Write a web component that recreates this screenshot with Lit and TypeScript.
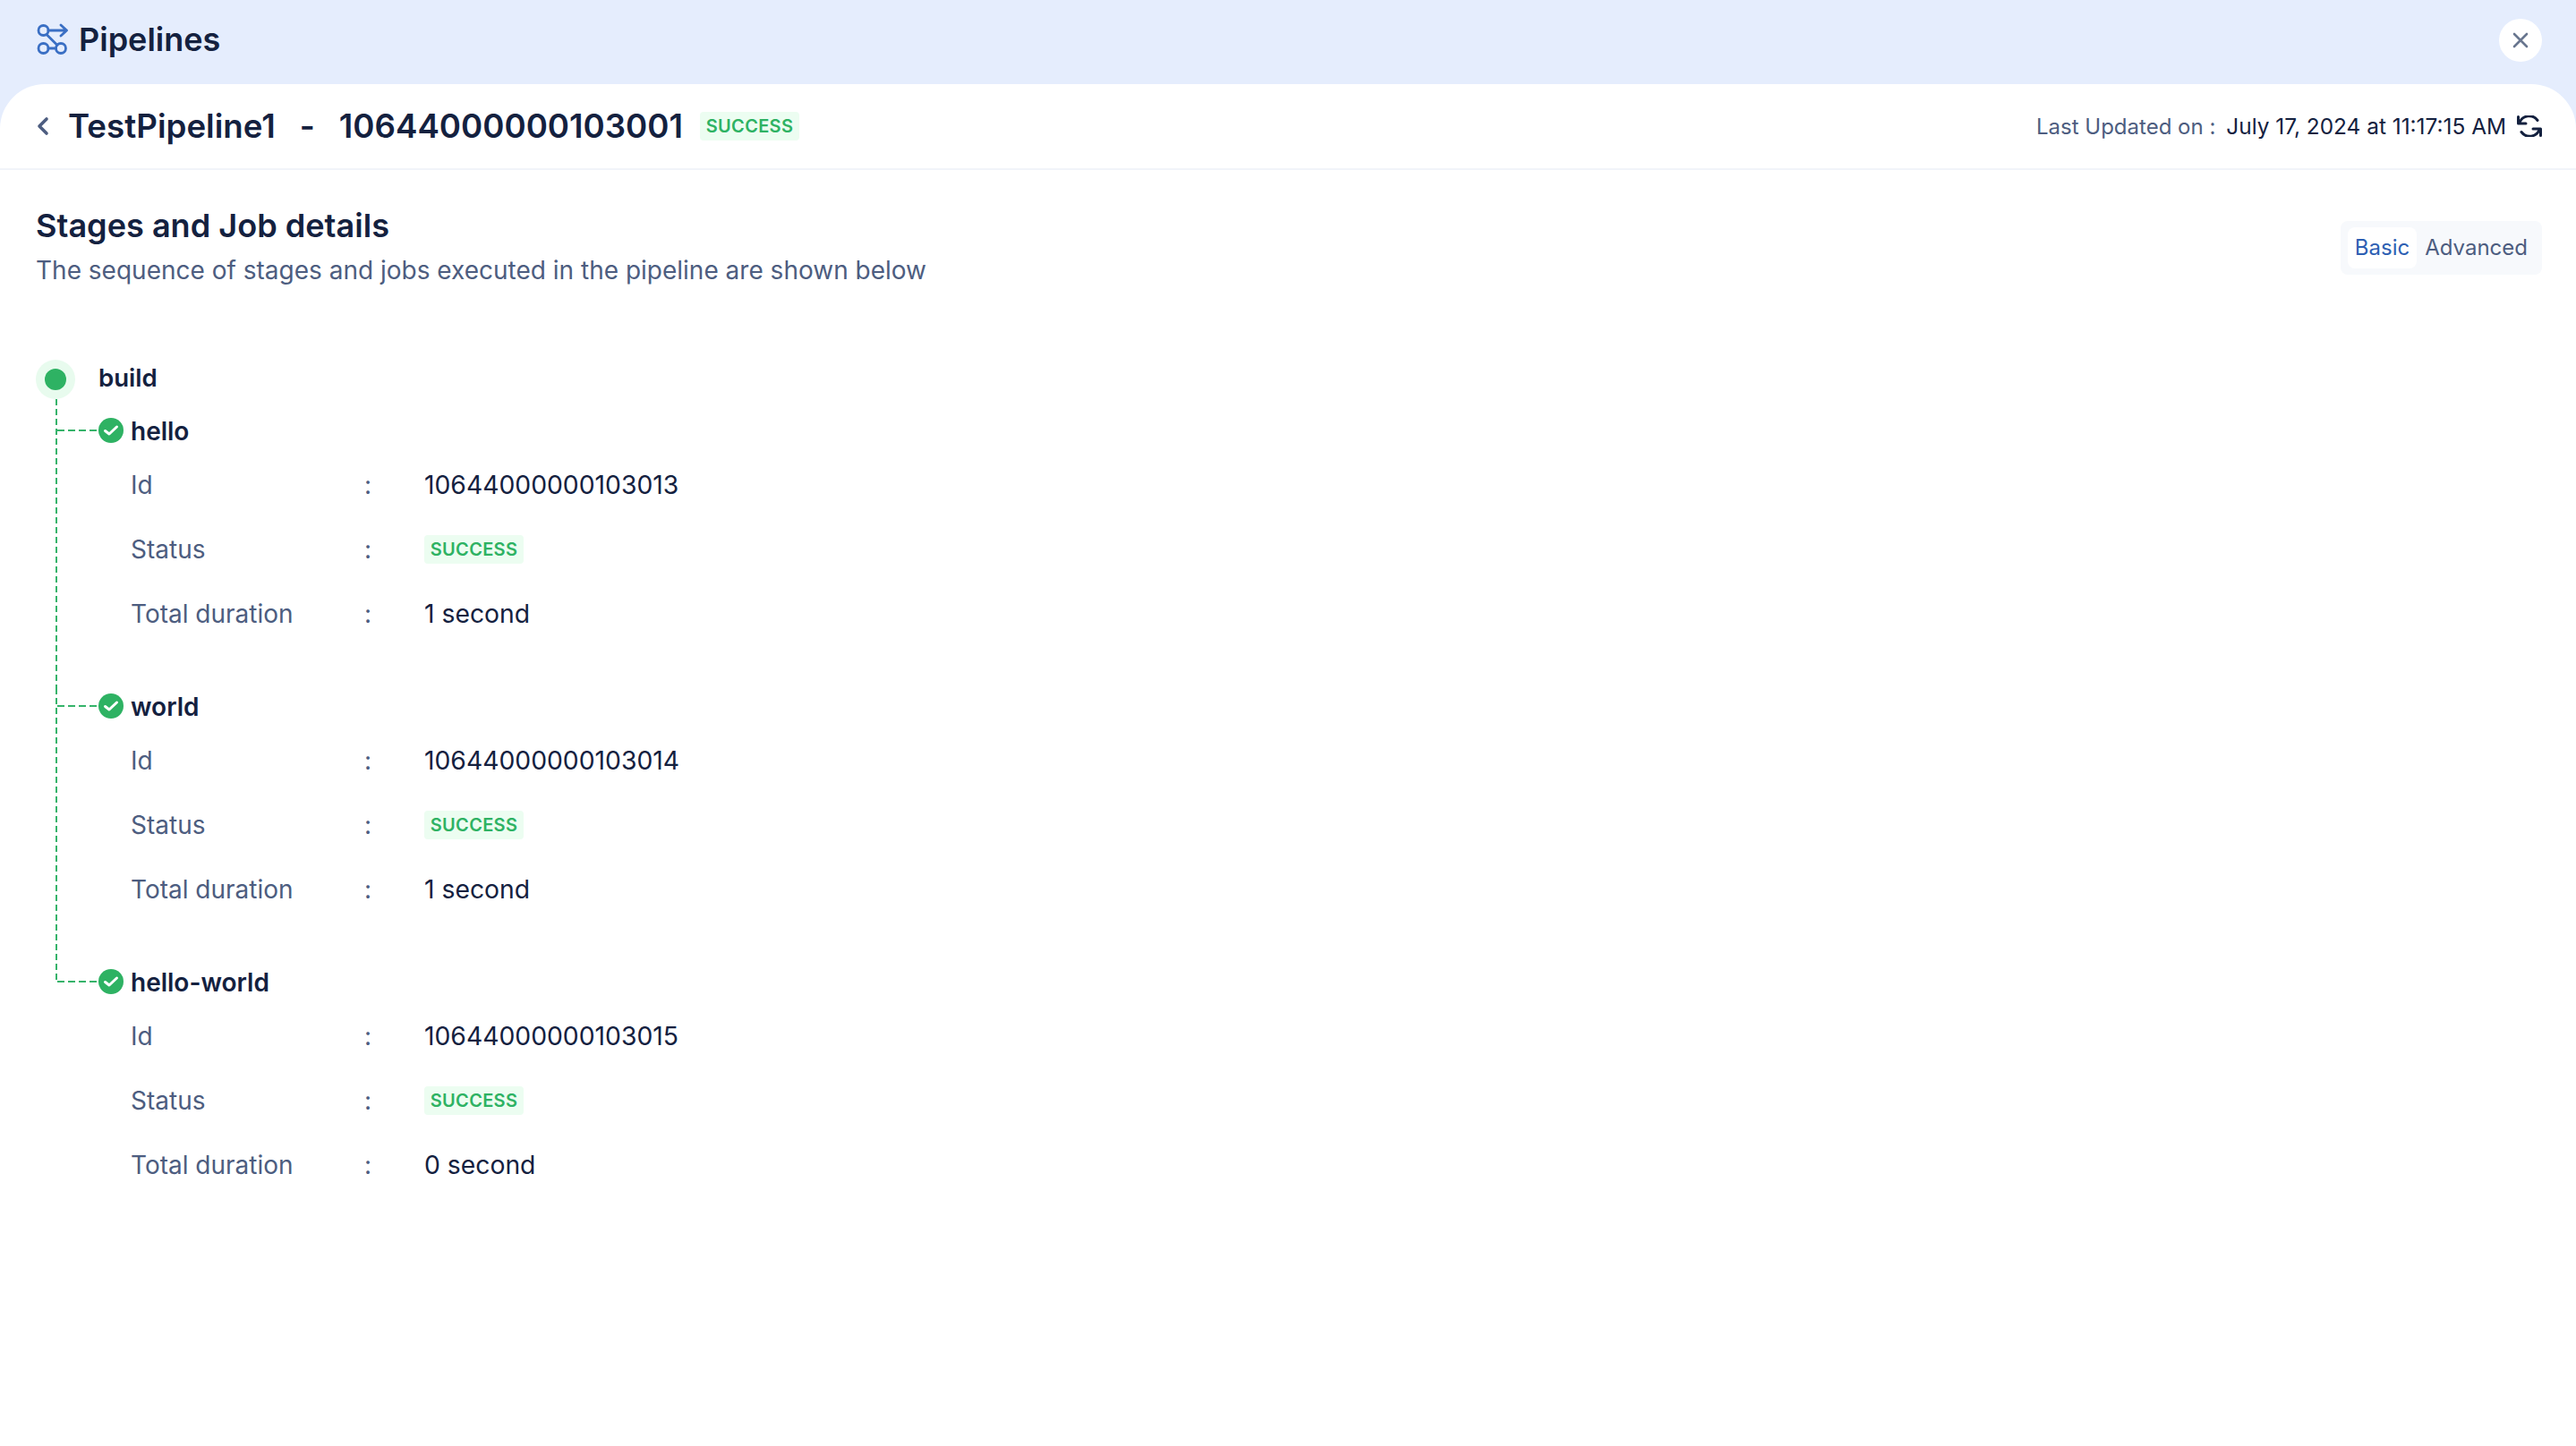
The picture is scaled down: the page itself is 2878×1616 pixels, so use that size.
import { LitElement, html, css, svg } from "lit";
import { customElement } from "lit/decorators.js";

const jobs = [
  { name: "hello", id: "10644000000103013", dur: "1 second" },
  { name: "world", id: "10644000000103014", dur: "1 second" },
  { name: "hello-world", id: "10644000000103015", dur: "0 second" },
];

const pipelineIcon = svg`<svg class="pipe" viewBox="0 0 36 36" fill="none" stroke="#3a6fc4" stroke-width="2.8" stroke-linecap="round" stroke-linejoin="round">
  <circle cx="8.5" cy="8" r="5.5"/><circle cx="8.5" cy="28" r="5.5"/><circle cx="28" cy="28" r="5.5"/>
  <path d="M14 8H34.5M28 2L34.5 8L28 14M12 12.5L24 24.5M14 28H22.5"/></svg>`;

const checkIcon = svg`<svg class="check" viewBox="0 0 28 28"><circle cx="14" cy="14" r="14" fill="#2eb263"/><path d="M7.5 14.5L12 18L20.5 10" fill="none" stroke="#fff" stroke-width="3" stroke-linecap="round" stroke-linejoin="round"/></svg>`;

@customElement("app-root")
export class AppRoot extends LitElement {
  static styles = css`
    :host { display: block; height: 100vh; background: #e5edfd; font-family: Inter, "Liberation Sans", sans-serif; color: #14213f; overflow: hidden; }
    .top { height: 94px; box-sizing: border-box; padding: 0 38px 6px 40px; display: flex; align-items: center; justify-content: space-between; }
    .brand { display: flex; align-items: center; gap: 12px; font-size: 36px; font-weight: 600; }
    .pipe { width: 36px; height: 36px; }
    .close { width: 48px; height: 48px; margin-top: 2px; border-radius: 50%; background: #fff; display: flex; align-items: center; justify-content: center; }
    .close svg { width: 20px; height: 20px; }
    .panel { height: calc(100vh - 94px); background: #fff; border-radius: 50px 50px 0 0; }
    .bar { height: 96px; box-sizing: border-box; padding: 0 38px 0 40px; border-bottom: 2px solid #f1f4f9; display: flex; align-items: center; justify-content: space-between; }
    .crumb { display: flex; align-items: center; }
    .back { width: 15px; height: 22px; margin-right: 21px; }
    .crumb h1 { margin: 0; display: flex; font-size: 36.7px; line-height: 48px; font-weight: 600; white-space: pre; }
    .crumb h1 .dash { margin: 0 27px 0 27px; }
    .badge { display: inline-flex; align-items: center; justify-content: center; box-sizing: border-box; width: 111px; height: 32px; background: #ecfdf1; color: #2eb263; font-size: 20px; font-weight: 600; letter-spacing: 0.3px; border-radius: 4px; }
    .crumb .badge { margin-left: 19px; }
    .updated { display: flex; align-items: center; font-size: 24px; color: #4d5d80; }
    .updated b { font-size: 24.4px; font-weight: 400; color: #14213f; margin-left: 12px; }
    .refresh { width: 28px; height: 24px; margin-left: 12px; }
    .section { padding: 38px 38px 0 40px; display: flex; justify-content: space-between; align-items: center; }
    .section h2 { margin: 0; font-size: 36.1px; line-height: 48px; font-weight: 600; }
    .section p { margin: 3px 0 0; font-size: 28px; line-height: 46px; color: #4d5d80; }
    .toggle { display: flex; box-sizing: border-box; height: 60px; padding: 7px 8px; background: #f7f9fc; border-radius: 8px; font-size: 24px; align-items: center; color: #4d5d80; }
    .toggle span { height: 46px; display: flex; align-items: center; padding: 0 8px; border-radius: 8px; }
    .toggle span + span { padding-left: 9px; }
    .toggle .on { background: #fff; color: #2d5fb3; }
    .tree { padding: 77px 0 0 40px; }
    .stage { display: flex; align-items: center; height: 44px; font-size: 27.6px; font-weight: 600; }
    .stage span { margin-top: -4px; }
    .dot { width: 44px; height: 44px; box-sizing: border-box; border-radius: 50%; background: #e8fbee; display: flex; align-items: center; justify-content: center; margin-right: 26px; }
    .dot i { width: 24px; height: 24px; border-radius: 50%; background: #2eb263; display: block; }
    .job { position: relative; margin-left: 22px; height: 308px; box-sizing: border-box; }
    .job.first { height: 323px; padding-top: 15px; }
    .spine { position: absolute; left: 0; top: 0; bottom: 0; width: 2px; background: repeating-linear-gradient(180deg, #35b36a 0 7px, transparent 7px 11px); }
    .job.last .spine { bottom: auto; height: 21px; }
    .name { display: flex; align-items: center; height: 40px; font-size: 28px; font-weight: 600; }
    .name span:last-child { margin-top: 2px; }
    .link { width: 46px; height: 2px; margin-left: 2px; background: repeating-linear-gradient(90deg, #35b36a 0 8px, transparent 8px 12px); }
    .check { width: 28px; height: 28px; margin-right: 8px; flex: none; }
    .rows { padding: 4px 0 0 84px; }
    .row { display: flex; align-items: center; height: 72px; font-size: 28px; }
    .row .k { width: 261px; margin-top: 2px; color: #4d5d80; }
    .row .c { width: 67px; margin-top: 2px; color: #4d5d80; }
    .row .v { color: #14213f; font-size: 28.3px; margin-top: 1px; }
    .row .badge { margin-top: 1px; }
  `;

  render() {
    return html`
      <div class="top">
        <div class="brand">${pipelineIcon}<span>Pipelines</span></div>
        <div class="close"><svg viewBox="0 0 20 20" fill="none" stroke="#69768f" stroke-width="2.6" stroke-linecap="round"><path d="M3 3L17 17M17 3L3 17"/></svg></div>
      </div>
      <div class="panel">
        <div class="bar">
          <div class="crumb">
            <svg class="back" viewBox="0 0 15 22" fill="none" stroke="#4d5d80" stroke-width="3.6" stroke-linecap="round" stroke-linejoin="round"><path d="M12 3L4 11L12 19"/></svg>
            <h1><span>TestPipeline1</span><span class="dash">-</span><span>10644000000103001</span></h1>
            <span class="badge">SUCCESS</span>
          </div>
          <div class="updated">
            <span>Last Updated on :</span><b>July 17, 2024 at 11:17:15 AM</b>
            <svg class="refresh" viewBox="0 0 28 24" fill="none" stroke="#14213f" stroke-width="3" stroke-linecap="round" stroke-linejoin="round">
              <path d="M1.5 1.5V9H10M26.5 22.5V15H18"/><path d="M2.8 8.5A11.5 11.5 0 0 1 23 5.5M25.2 15.5A11.5 11.5 0 0 1 5 18.5"/>
            </svg>
          </div>
        </div>
        <div class="section">
          <div>
            <h2>Stages and Job details</h2>
            <p>The sequence of stages and jobs executed in the pipeline are shown below</p>
          </div>
          <div class="toggle"><span class="on">Basic</span><span>Advanced</span></div>
        </div>
        <div class="tree">
          <div class="stage"><div class="dot"><i></i></div><span>build</span></div>
          ${jobs.map((j, i) => html`
            <div class="job ${i === 0 ? "first" : ""} ${i === jobs.length - 1 ? "last" : ""}">
              <div class="spine"></div>
              <div class="name"><span class="link"></span>${checkIcon}<span>${j.name}</span></div>
              <div class="rows">
                <div class="row"><span class="k">Id</span><span class="c">:</span><span class="v">${j.id}</span></div>
                <div class="row"><span class="k">Status</span><span class="c">:</span><span class="badge">SUCCESS</span></div>
                <div class="row"><span class="k">Total duration</span><span class="c">:</span><span class="v">${j.dur}</span></div>
              </div>
            </div>`)}
        </div>
      </div>
    `;
  }
}
